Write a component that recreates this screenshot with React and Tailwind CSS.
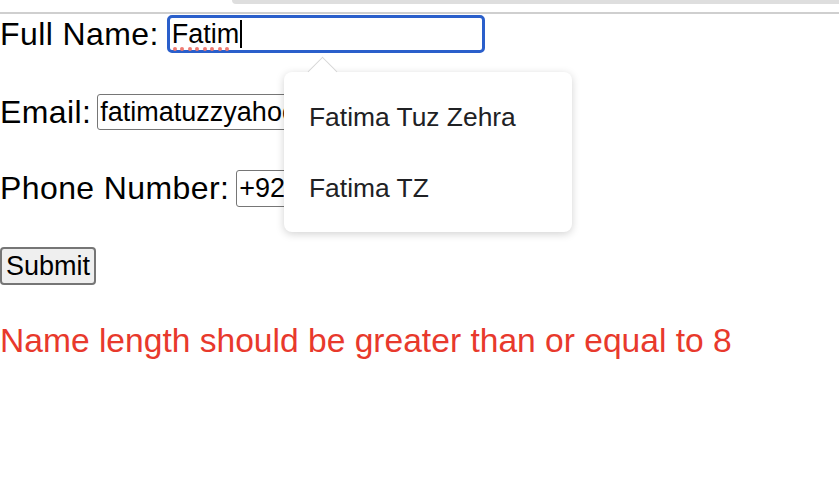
import React from 'react';

const suggestions = ['Fatima Tuz Zehra', 'Fatima TZ'];

const App = () => {
  return (
    <div className="relative w-[839px] h-[486px] bg-white text-black font-['Liberation_Sans',Arial,sans-serif] overflow-hidden">
      {/* leftover of the browser chrome */}
      <div className="h-[12px]">
        <div className="ml-[232px] h-[4px] bg-[#dedede] rounded-bl-[14px]" />
      </div>
      <div className="h-[2px] bg-[#cfcfcf]" />

      <form className="flex flex-col items-start">
        <div className="flex items-center h-[40px]">
          <label className="text-[32px] leading-none tracking-[0.4px]">Full Name:</label>
          <div className="ml-[8px] w-[318px] h-[38px] border-[3px] border-[#2a5fcb] rounded-[5px] px-[2px] flex items-center text-[27px] leading-none">
            <span className="relative">
              Fatim
              {/* spellcheck dots */}
              <span className="absolute left-[1px] -bottom-[3px] flex gap-[3.5px]">
                {Array.from({ length: 8 }).map((_, i) => (
                  <span key={i} className="w-[4px] h-[4px] rounded-full bg-[#ef7b72]" />
                ))}
              </span>
            </span>
            <span className="w-[2px] h-[28px] bg-black ml-[1px]" />
          </div>
        </div>

        <div className="flex items-center h-[40px] mt-[38px]">
          <label className="text-[32px] leading-none tracking-[0.4px]">Email:</label>
          <div className="ml-[6px] w-[318px] h-[36px] border-[1.5px] border-[#767676] rounded-[3px] px-[2px] flex items-center text-[27px] leading-none overflow-hidden whitespace-nowrap">
            fatimatuzzyahoo@gmail.com
          </div>
        </div>

        <div className="flex items-center h-[40px] mt-[36px]">
          <label className="text-[32px] leading-none tracking-[0.4px]">Phone Number:</label>
          <div className="ml-[7px] w-[318px] h-[37px] border-[1.5px] border-[#767676] rounded-[3px] px-[2px] flex items-center text-[27px] leading-none overflow-hidden whitespace-nowrap">
            +923001234567
          </div>
        </div>

        <div className="flex items-center h-[40px] mt-[38px]">
          <button type="button" className="h-[38px] px-[4px] bg-[#efefef] border-2 border-[#767676] rounded-[4px] text-[27px] leading-none">
            Submit
          </button>
        </div>

        <p className="mt-[35px] h-[40px] flex items-center text-[33.6px] leading-none text-[#e8392c]">
          Name length should be greater than or equal to 8
        </p>
      </form>

      {/* autofill dropdown */}
      <div className="absolute left-[284px] top-[72px] w-[288px] h-[160px] bg-white rounded-[8px] shadow-[0_2px_8px_rgba(0,0,0,0.18)]">
        <div className="absolute left-[28px] -top-[11px] w-[21px] h-[21px] bg-white rotate-45 border-l border-t border-[#d6d6d6]" />
        <div className="relative flex flex-col pt-[27px]">
          {suggestions.map((s, i) => (
            <div key={i} className={`pl-[25px] h-[36px] flex items-center text-[26.4px] leading-none text-[#202124] ${i === 1 ? 'mt-[35px]' : ''}`}>
              {s}
            </div>
          ))}
        </div>
      </div>
    </div>
  );
};

export default App;
